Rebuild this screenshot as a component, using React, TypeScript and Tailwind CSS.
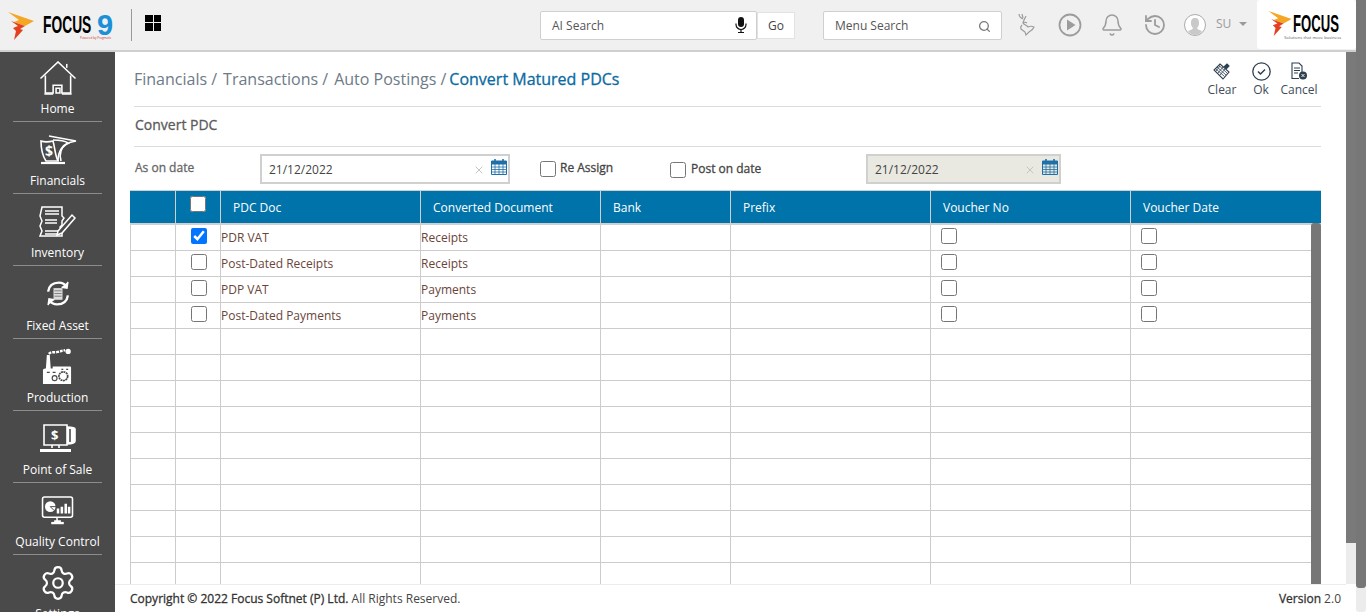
import { Bell, History, Search, Settings, X } from 'lucide-react';

const COLS = 'grid grid-cols-[45px_45px_200px_180px_130px_200px_200px_191px]';
const HEAVY = '[-webkit-text-stroke:0.3px]';

const rows = [
  { doc: 'PDR VAT', conv: 'Receipts', checked: true },
  { doc: 'Post-Dated Receipts', conv: 'Receipts' },
  { doc: 'PDP VAT', conv: 'Payments' },
  { doc: 'Post-Dated Payments', conv: 'Payments' },
  {}, {}, {}, {}, {}, {}, {}, {}, {}, {},
] as { doc?: string; conv?: string; checked?: boolean }[];

const Flame = ({ className }: { className: string }) => (
  <svg className={className} viewBox="0 0 26 28">
    <polygon points="0,0 26,9 17,14 6,10 11,8" fill="#f5a623" />
    <polygon points="3,9 17,14 12,17 15,18 6,28 8,19 5,16 10,14" fill="#e2401f" />
  </svg>
);

const HomeIcon = () => (
  <svg className="w-[38px] h-[35px]" viewBox="0 0 38 36" fill="none" stroke="#fff" strokeWidth="1.6">
    <path d="M1 18 19 1l18 17" />
    <path d="M28 7V3" />
    <path d="M6 15v18h8V25h9v8h9V15" />
    <path d="M5 34h9M23 34h10M17 28h4v5h-4z" />
  </svg>
);

const FinancialsIcon = () => (
  <svg className="w-[38px] h-[30px]" viewBox="0 0 38 30" fill="none" stroke="#fff" strokeWidth="1.6">
    <path d="M2 6c3 1 8 1 12 0 2 7 2 14 5 20H7C3 20 2 12 2 6z" />
    <path d="M10 1l27 5c-7 1-13 4-15 10-1 3-1 7 0 10" />
    <path d="M14 5c5 0 12 1 15 3-5 2-10 8-10 18" />
    <path d="M2 28h24" strokeWidth="2.2" />
    <text x="6" y="21" fill="#fff" stroke="none" fontSize="14" fontWeight="700" fontFamily="Open Sans">$</text>
  </svg>
);

const InventoryIcon = () => (
  <svg className="w-[38px] h-[32px]" viewBox="0 0 38 32" fill="none" stroke="#fff" strokeWidth="1.5">
    <path d="M3 1h20v9l2 2-2 3v4l-2 2 2 3v6H1l2-5-2-5 2-5-2-5z" />
    <path d="M6 5h14M6 8h14M6 14h12M6 17h12M6 25h14M6 28h14" strokeWidth="1.6" />
    <path d="M19 25 33 9l3 3-13 15-5 2z" fill="#4a4a4a" />
  </svg>
);

const FixedAssetIcon = () => (
  <svg className="w-[24px] h-[27px]" viewBox="0 0 26 30" fill="none" stroke="#fff" strokeWidth="2.6">
    <path d="M2 13C3 6 8 3 14 3c4 0 7 2 9 5" />
    <path d="M24 17c-1 7-6 10-12 10-4 0-7-2-9-5" />
    <path d="m24 2-1 7-6-1M2 28l1-7 6 1" strokeWidth="1.6" fill="#fff" />
    <path d="M8 9h10v13H8z" fill="#ddd" stroke="none" />
    <path d="M9 12h8M9 15h8M9 18h8" stroke="#777" strokeWidth="1" />
  </svg>
);

const ProductionIcon = () => (
  <svg className="w-[31px] h-[37px]" viewBox="0 0 32 36" fill="#fff">
    <path d="M3 20h1l1-14h3l1 14h2v-2h18a1 1 0 0 1 1 1v17H1V21z" />
    <path d="M7 5c3-3 6-1 9-2 3-1 5-1 8-2" fill="none" stroke="#fff" strokeWidth="2.4" strokeDasharray="3 1" />
    <circle cx="27" cy="2.500" r="2.700" />
    <circle cx="22" cy="28" r="4.500" fill="none" stroke="#4a4a4a" strokeWidth="1.800" strokeDasharray="2 .6" />
    <circle cx="13" cy="30" r="2.500" fill="none" stroke="#4a4a4a" strokeWidth="1.200" />
    <path d="M5 24h3M11 24h3M20 21h2M25 21h2" stroke="#4a4a4a" strokeWidth="1.200" />
  </svg>
);

const PosIcon = () => (
  <svg className="w-[38px] h-[28px]" viewBox="0 0 38 28" fill="none" stroke="#fff" strokeWidth="1.6">
    <path d="M5 1h23v20H5z" />
    <path d="M28 3c4 0 8 1 8 2v12c0 2-4 3-8 3" fill="#fff" />
    <path d="M31 5v13" stroke="#4a4a4a" />
    <path d="M13 21v3M20 21v3" />
    <path d="M1 26.500h31" strokeWidth="3" />
    <text x="12" y="16" fill="#fff" stroke="none" fontSize="13" fontWeight="700" fontFamily="Open Sans">$</text>
  </svg>
);

const QualityIcon = () => (
  <svg className="w-[34px] h-[29px]" viewBox="0 0 34 30" fill="none" stroke="#fff" strokeWidth="1.6">
    <rect x="1" y="1" width="31" height="21" rx="2" />
    <path d="M16 22v3M13 26h7" />
    <path d="M10 28h13" strokeWidth="2.400" />
    <circle cx="9" cy="11" r="5.500" fill="#fff" stroke="none" />
    <path d="M9 11h6M9 11l4 4" stroke="#4a4a4a" strokeWidth="1" />
    <path d="M17 18v-5M21 18v-7M25 18V8M28.500 18V11" strokeWidth="2.600" />
  </svg>
);

const MicIcon = () => (
  <svg className="w-[12px] h-[16px]" viewBox="0 0 12 16" fill="none">
    <rect x="3" y="0" width="6" height="10" rx="3" fill="#111" />
    <path d="M1 6.500v1a5 5 0 0 0 10 0v-1M6 12.500V15M3 15.500h6" stroke="#111" strokeWidth="1.200" />
  </svg>
);

const DeerIcon = () => (
  <svg className="w-[17px] h-[24px]" viewBox="0 0 17 24" fill="none" stroke="#9c9c9c" strokeWidth="1.200">
    <path d="M1 1c0 3 2 4 4 5M4 1l1 4M8 3 6 7 5 10c1 2 4 2 5 4 2-1 4-1 6 0-1 3-3 4-5 5l-3 3-1-3-4-3c-1-2 0-3 1-4" />
    <path d="M5 10c1-1 3-1 4 0" />
  </svg>
);

const PlayIcon = () => (
  <svg className="w-[24px] h-[24px]" viewBox="0 0 24 24" fill="none">
    <circle cx="12" cy="12" r="10.500" stroke="#9c9c9c" strokeWidth="1.800" />
    <path d="M9 6.500 17.500 12 9 17.500z" fill="#9c9c9c" />
  </svg>
);

const AvatarIcon = () => (
  <svg className="w-[22px] h-[22px]" viewBox="0 0 22 22">
    <circle cx="11" cy="11" r="10.500" fill="#fff" stroke="#aaa" />
    <path d="M11 4c3 0 4 2 4 5s-1 4-2 5c0 1 2 2 5 3-2 3-5 4-7 4s-5-1-7-4c3-1 5-2 5-3-1-1-2-2-2-5s1-5 4-5z" fill="#c9c9c9" />
  </svg>
);

const ClearIcon = () => (
  <svg className="w-[18px] h-[18px]" viewBox="0 0 18 18" fill="none" stroke="#2e3f50" strokeWidth="1.100">
    <path d="M7 2 16 10 10 17 1 8z" />
    <path d="M4 5l9 8M6 3.500l8.500 8M2.500 6.500l9 8M5 11l5-6M7 13l5-6M3 9l4-5" strokeWidth=".8" />
    <path d="M11 5l3-3 2 2-3 3" fill="#2e3f50" />
  </svg>
);

const OkIcon = () => (
  <svg className="w-[19px] h-[19px]" viewBox="0 0 19 19" fill="none" stroke="#2e3f50" strokeWidth="1.300">
    <circle cx="9.500" cy="9.500" r="8.700" />
    <path d="m6 9.500 2.500 2.500L13 7.500" strokeWidth="1.500" />
  </svg>
);

const CancelIcon = () => (
  <svg className="w-[18px] h-[18px]" viewBox="0 0 18 18" fill="none" stroke="#2e3f50" strokeWidth="1.100">
    <path d="M9 16.500H2V1h7l3 3v6" />
    <path d="M4 6h6M4 8.500h6M4 11h4" />
    <circle cx="13" cy="13.500" r="4" fill="#2e3f50" stroke="none" />
    <path d="m11.500 12 3 3m0-3-3 3" stroke="#fff" strokeWidth=".9" />
  </svg>
);

const CalendarIcon = () => (
  <svg className="w-[16px] h-[18px]" viewBox="0 0 16 18" fill="none" stroke="#1f6fa8" strokeWidth="1">
    <path d="M.5 3.500h15v13H.5z" />
    <path d="M.5 3h15v3H.5z" fill="#1f6fa8" />
    <path d="M4 1v3M12 1v3" strokeWidth="1.600" />
    <path d="M.5 9h15M.5 11.500h15M.5 14h15M4 6v10M8 6v10M12 6v10" strokeWidth=".8" />
  </svg>
);

const LogoWord = ({ className }: { className: string }) => (
  <span className={`inline-block font-['Liberation_Sans',sans-serif] font-bold text-black leading-none origin-left ${className}`}>
    FOCUS
  </span>
);

const DateInput = ({ disabled, className }: { disabled?: boolean; className: string }) => (
  <div className={`flex items-center h-[30px] border-2 border-[#d0d0d0] pl-[7px] pr-[1px] ${disabled ? 'bg-[#e9e9e1]' : 'bg-white'} ${className}`}>
    <span className="flex-1 text-[12px] text-[#444] pt-[1px]">21/12/2022</span>
    <X className="w-[12px] h-[12px] text-[#c4c4c4] mr-[6px] mt-[2px]" strokeWidth={2} />
    <div className="mb-[5px]"><CalendarIcon /></div>
  </div>
);

const sideItems = [
  { label: 'Home', icon: <HomeIcon /> },
  { label: 'Financials', icon: <FinancialsIcon /> },
  { label: 'Inventory', icon: <InventoryIcon /> },
  { label: 'Fixed Asset', icon: <FixedAssetIcon /> },
  { label: 'Production', icon: <ProductionIcon /> },
  { label: 'Point of Sale', icon: <PosIcon /> },
  { label: 'Quality Control', icon: <QualityIcon /> },
  { label: 'Settings', icon: <Settings className="w-[38px] h-[38px] text-white" strokeWidth={1.4} /> },
];

const Check = ({ on, className = '' }: { on?: boolean; className?: string }) => (
  <input type="checkbox" defaultChecked={on} className={`w-[16px] h-[16px] m-0 ${className}`} />
);

export default function App() {
  return (
    <div className="flex h-[612px] w-[1366px] overflow-hidden bg-white font-['Open_Sans',sans-serif]">
      <div className="flex flex-col w-[1356px]">
        <header className="flex items-center h-[52px] shrink-0 bg-[#f0f0f0] border-b-2 border-[#cfcfcf]">
          <div className="flex items-center w-[131px] pl-[8px] h-full shrink-0">
            <Flame className="w-[26px] h-[28px] mt-[2px]" />
            <div className="relative flex items-center ml-[9px] w-[72px] h-[30px]">
              <LogoWord className="text-[23px] scale-x-[0.6]" />
              <span className="absolute left-[54px] top-[1px] text-[29px] font-bold text-[#1b8fd8] leading-none font-['Liberation_Sans',sans-serif]">9</span>
              <span className="absolute left-[37px] top-[27px] text-[3px] text-[#c33] leading-none whitespace-nowrap">Powered by Pragmatic</span>
            </div>
          </div>
          <div className="w-px h-[32px] bg-[#9a9a9a] shrink-0" />
          <div className="grid grid-cols-2 gap-px w-[16px] h-[16px] ml-[13px] shrink-0 mb-[5px]">
            <span className="bg-black" />
            <span className="bg-black" />
            <span className="bg-black" />
            <span className="bg-black" />
          </div>
          <div className="flex items-center ml-[379px] shrink-0">
            <div className="flex items-center w-[217px] h-[29px] bg-white border border-[#cfcfcf] rounded-[2px] pl-[11px] pr-[9px]">
              <span className="flex-1 text-[12px] text-[#555] pt-[2px]">AI Search</span>
              <MicIcon />
            </div>
            <div className="flex items-center justify-center w-[38px] h-[27px] bg-white border border-[#e2e2e2] pt-px text-[12px] text-[#444]">Go</div>
          </div>
          <div className="flex items-center w-[179px] h-[29px] ml-[28px] bg-white border border-[#cfcfcf] rounded-[2px] pl-[11px] pr-[10px] shrink-0">
            <span className="flex-1 text-[12px] text-[#555] pt-[2px]">Menu Search</span>
            <Search className="w-[13px] h-[13px] text-[#7a7a7a] mt-[2px]" strokeWidth={2.4} />
          </div>
          <div className="flex items-center ml-[16px] shrink-0">
            <DeerIcon />
            <div className="ml-[23px]"><PlayIcon /></div>
            <Bell className="w-[24px] h-[24px] ml-[18px] text-[#9c9c9c]" strokeWidth={1.5} />
            <History className="w-[24px] h-[24px] ml-[19px] text-[#9c9c9c]" strokeWidth={1.8} />
            <div className="ml-[17px]"><AvatarIcon /></div>
            <span className="ml-[10px] text-[12px] text-[#9a9a9a] mb-[3px]">SU</span>
            <span className="ml-[8px] mb-[3px] w-0 h-0 border-x-[4px] border-x-transparent border-t-[4px] border-t-[#9a9a9a]" />
          </div>
          <div className="relative ml-[10px] w-[99px] h-[49px] shrink-0 bg-white rounded-[3px] mb-[2px] pl-[11px] pt-[11px]">
            <Flame className="w-[24px] h-[25px]" />
            <LogoWord className="absolute left-[36px] top-[13px] text-[23px] scale-x-[0.57]" />
            <span className="absolute left-[27px] top-[36px] text-[4px] text-[#555] leading-none whitespace-nowrap tracking-[0.02em]">Solutions that move business</span>
          </div>
        </header>

        <div className="flex flex-1 min-h-0">
          <aside className="w-[115px] shrink-0 bg-[#4a4a4a] overflow-hidden">
            {sideItems.map((item, i) => (
              <div
                key={item.label}
                className={`flex flex-col items-center justify-end mx-[13px] pb-[4px] border-b border-[#8c8c8c] ${i === 0 ? 'h-[70px]' : 'h-[72.2px]'}`}
              >
                <div className="flex items-center justify-center flex-1 pt-[5px]">{item.icon}</div>
                <span className="text-[12px] leading-[17px] text-white whitespace-nowrap">{item.label}</span>
              </div>
            ))}
          </aside>

          <main className="flex flex-col w-[1231px] shrink-0 min-h-0">
            <div className="flex-1 min-h-0 overflow-hidden pl-[15px] pr-[25px]">
              <div className="flex justify-between ml-[4px] h-[55px] border-b border-[#dcdcdc]">
                <div className="flex items-center gap-[5px] h-[54px] text-[16px] text-[#6e7a86] whitespace-nowrap">
                  <span>Financials /</span>
                  <span className="ml-px">Transactions /</span>
                  <span className="ml-px">Auto Postings /</span>
                  <span className={`ml-[-2px] text-[#0a6aa1] ${HEAVY}`}>Convert Matured PDCs</span>
                </div>
                <div className="flex items-start pt-[10px] text-[12px] text-[#3e4c59]">
                  <div className="flex flex-col items-center w-[30px]"><ClearIcon /><span className="mt-[1px] leading-[17px]">Clear</span></div>
                  <div className="flex flex-col items-center w-[30px] ml-[9px]"><OkIcon /><span className="leading-[17px]">Ok</span></div>
                  <div className="flex flex-col items-center w-[36px] ml-[5px] mr-[4px]"><CancelIcon /><span className="mt-[1px] leading-[17px]">Cancel</span></div>
                </div>
              </div>
              <div className={`flex items-center ml-[4px] h-[40px] pb-[4px] border-b border-[#dcdcdc] pl-px text-[14px] text-[#5b5b5b] ${HEAVY}`}>
                Convert PDC
              </div>
              <div className="flex items-start h-[43px] pt-[7px]">
                <span className={`w-[125px] ml-[5px] pt-[5px] text-[12px] text-[#666] ${HEAVY}`}>As on date</span>
                <DateInput className="w-[250px]" />
                <label className={`flex items-center ml-[30px] w-[130px] pt-[5px] text-[12px] text-[#444] ${HEAVY}`}>
                  <Check />
                  <span className="ml-[4px] mb-[2px]">Re Assign</span>
                </label>
                <label className={`flex items-center pt-[6px] w-[196px] text-[12px] text-[#444] ${HEAVY}`}>
                  <Check />
                  <span className="ml-[5px] mb-[2px]">Post on date</span>
                </label>
                <DateInput disabled className="w-[195px]" />
              </div>

              <div className="relative">
                <div className={`${COLS} h-[35px] bg-[#0073aa] border-t border-[#cfcfcf] border-b-2 border-b-[#d0d0d0] text-[12px] text-white`}>
                  <div />
                  <div className="flex justify-center pt-[5px] border-l border-[#cfcfcf]">
                    <Check />
                  </div>
                  {['PDC Doc', 'Converted Document', 'Bank', 'Prefix', 'Voucher No', 'Voucher Date'].map((h) => (
                    <div key={h} className="pl-[12px] pt-[8px] border-l border-[#cfcfcf] whitespace-nowrap">{h}</div>
                  ))}
                </div>
                {rows.map((r, i) => (
                  <div key={i} className={`${COLS} h-[26px] border-b border-[#cccccc] text-[12px] text-[#6a453a]`}>
                    <div className="border-l border-[#cccccc]" />
                    <div className="flex justify-center pt-[3px] pl-px border-l border-[#cccccc]">
                      {r.doc && <Check on={r.checked} />}
                    </div>
                    <div className="pt-[4px] border-l border-[#cccccc] whitespace-nowrap">{r.doc}</div>
                    <div className="pt-[4px] border-l border-[#cccccc]">{r.conv}</div>
                    <div className="border-l border-[#cccccc]" />
                    <div className="border-l border-[#cccccc]" />
                    <div className="pl-[10px] pt-[3px] border-l border-[#cccccc]">{r.doc && <Check />}</div>
                    <div className="pl-[10px] pt-[3px] border-l border-[#cccccc]">{r.doc && <Check />}</div>
                  </div>
                ))}
                <div className="absolute right-0 top-[33px] bottom-0 w-[10px] rounded-t-[3px] bg-[#777]" />
              </div>
            </div>
            <footer className="flex items-center justify-between h-[28px] shrink-0 pl-[15px] pr-[25px] bg-white border-t border-[#ececec] text-[12px] text-[#444] whitespace-nowrap">
              <span>
                <span className={`text-[#333] ${HEAVY}`}>Copyright © 2022 Focus Softnet (P) Ltd.</span> All Rights Reserved.
              </span>
              <span className="mr-[-20px]">
                <span className={`text-[#333] ${HEAVY}`}>Version</span> 2.0
              </span>
            </footer>
          </main>

          <div className="flex flex-col w-[10px] shrink-0">
            <div className="h-[491px] bg-[#7a7a7a]" />
            <div className="h-[41px] bg-[#ececec]" />
            <div className="flex-1 bg-white" />
          </div>
        </div>
      </div>

      <div className="flex flex-col w-[10px] shrink-0">
        <div className="h-[588px] rounded-b-[3px] bg-[#777]" />
        <div className="flex-1 rounded-b-[3px] bg-[#ececec]" />
      </div>
    </div>
  );
}
